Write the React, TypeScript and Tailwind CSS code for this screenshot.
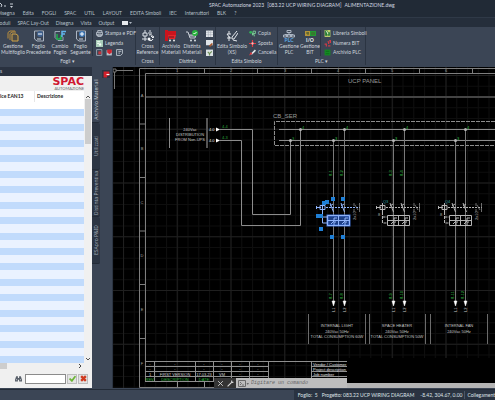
import type { ReactNode } from "react";

const MENU = ["Disegna", "Edita", "FOGLI", "SPAC", "UTIL", "LAYOUT", "EDITA Simboli", "IEC", "Interruttori", "BLK", "?"];
const TABS = ["Moduli", "SPAC Lay-Out", "Disegna", "Vista", "Output"];
const SIDE_TABS = ["Archivio Materiali", "Utilizzati", "Distinta Preventiva", "ESApro P&ID"];

function Icon({ children, small }: { children: ReactNode; small?: boolean }) {
  return (
    <svg
      viewBox="0 0 12 12"
      aria-hidden="true"
      fill="none"
      className={small ? "size-[7px] shrink-0" : "size-[12px] shrink-0"}
    >
      {children}
    </svg>
  );
}

/* ---------- ribbon icons ---------- */

const PagesIcon = (
  <Icon>
    <path d="M1 8.500V2.500L3 1h5M3 10V3.500L5 2h4" stroke="#b98d3c" />
    <path d="M5 4h4l2 1.500V11H5z" stroke="#d3a549" fill="#4c4a45" />
  </Icon>
);
const PrevIcon = (
  <Icon>
    <path d="M1.500 1h9v10H4L1.500 9z" stroke="#aab4c2" />
    <circle cx="7" cy="4" r="3" fill="#3f618e" />
    <path d="M5 4h4" stroke="#fff" />
    <path d="M4 9h4" stroke="#cdd5df" />
  </Icon>
);
const NextIcon = (
  <Icon>
    <path d="M1.500 1h9v10H4L1.500 9z" stroke="#aab4c2" />
    <circle cx="7" cy="4" r="3" fill="#3f79b8" />
    <path d="M5 4h4M7 2v4" stroke="#fff" />
    <path d="M4 9h4" stroke="#cdd5df" />
  </Icon>
);
const SwapIcon = (
  <Icon>
    <path d="M6 1.500H1v6l3 3h5V7" stroke="#9aa7b5" />
    <path d="M3 4v5h4V5M5 9l2-1" stroke="#1fae4d" strokeWidth="1.500" />
    <path d="M8 7V1.500h4M8 4h3" stroke="#63b6ee" strokeWidth="1.500" />
  </Icon>
);
const CrossIcon = (
  <Icon>
    <path d="M3 0v3M1 3h4v3H1zM3 6v5M0 9h5M8 0v2M6 3h4" stroke="#dde3ea" />
    <path d="M7 5c3-1 4 1 4 3M11 9c-1 2-3 2-4 1M9 6l2 2 1-2" stroke="#f2f5f8" />
    <circle cx="7" cy="9" r="1.500" fill="#f2f5f8" />
  </Icon>
);
const ArchiveIcon = (
  <Icon>
    <path d="M0 0h3v11H0zM3 1h8v5H3z" fill="#c9141d" />
    <path d="M3 5h8l-1 4H4z" fill="#e3262c" />
    <path d="M4 7h5" stroke="#6d1218" />
    <circle cx="5" cy="10.500" r="1" fill="#e8e8e8" />
    <circle cx="9" cy="10.500" r="1" fill="#e8e8e8" />
  </Icon>
);
const CartIcon = (
  <Icon>
    <path d="M0 2h2l2 6h5l1-3H3M4 6h5" stroke="#c8ced6" />
    <circle cx="5" cy="10.500" r="1" fill="#d8dde3" />
    <circle cx="9" cy="10.500" r="1" fill="#d8dde3" />
    <circle cx="9" cy="3" r="3" fill="#27b33d" />
    <path d="M7.500 3l1 1 2-2" stroke="#fff" />
  </Icon>
);
const EditIcon = (
  <Icon>
    <path d="M3 1v3M1 4h4M3 6v5M1 8h4M1 4l3 4" stroke="#e4e8ed" />
    <path d="M11 1L6 7v2h2l4-6M7 10l4 1" stroke="#e4e8ed" />
  </Icon>
);
const PlcIcon = (
  <svg viewBox="0 0 12 12" className="size-[12px]" aria-hidden="true" fill="none">
    <path d="M4 .5h4v2H4zM6 2.500v2M2 5.500v-1h8v1M.5 5h3v2h-3zM4.500 5h3v2h-3zM8.500 5h3v2h-3z" stroke="#aab4c2" />
    <text x="6" y="12" fontSize="5" textAnchor="middle" fill="#5aa9e6" className="font-bold">PLC</text>
  </svg>
);
const BitIcon = (
  <svg viewBox="0 0 12 12" className="size-[12px]" aria-hidden="true" fill="none">
    <path d="M1 1h5v5H1z" fill="#b49338" />
    <path d="M6 1h6v5H6z" fill="#229b33" />
    <path d="M2 3h3M4 2v3M8 2v3M10 2v3" stroke="#4b5a2c" />
    <text x="6" y="12" fontSize="5" textAnchor="middle" fill="#f1f3f5" className="font-bold">I/O</text>
  </svg>
);

const PrintIcon = (
  <Icon small>
    <path d="M3 4V1h7v3M1 4h10v5H1zM3 7h6v4H3z" stroke="#c4ccd6" strokeWidth="1.500" />
  </Icon>
);
const LegendIcon = (
  <Icon small>
    <path d="M0 0h12v12H0z" fill="#a8ccb8" />
    <path d="M2 3h5M2 6h3M7 10V5M9 8h-4" stroke="#f5fff8" strokeWidth="2" />
  </Icon>
);
const TableIcon = (
  <Icon small>
    <path d="M0 1h12v11H0z" fill="#e4e8ec" />
    <path d="M0 4h12M0 8h12M4 1v11M8 1v11" stroke="#a3abb5" />
  </Icon>
);
const PencilTableIcon = (
  <Icon small>
    <path d="M0 0h12v9H0z" fill="#dfe3e8" />
    <path d="M5 10l5-5 2 2-5 5z" fill="#a5572d" />
  </Icon>
);
const RefreshTableIcon = (
  <Icon small>
    <path d="M0 1h12v11H0z" fill="#dce2e4" />
    <path d="M3 5l3 3 4-4M6 8v3" stroke="#6f8f58" strokeWidth="2" />
  </Icon>
);
const SheetRedIcon = (
  <Icon small>
    <path d="M1 1h9v10H1z" stroke="#9fa9b6" strokeWidth="1.500" />
    <path d="M4 4h5v5H4z" fill="#c0353c" />
  </Icon>
);
const SheetMarkIcon = (
  <Icon small>
    <path d="M1 2h9v9H1z" fill="#b8c0ca" />
    <path d="M2 1h8v5L6 9 2 6z" fill="#cf2630" />
  </Icon>
);
const SheetGreyIcon = (
  <Icon small>
    <path d="M1 1h10v7l-3 3H1zM4 4h5M4 7h3" stroke="#c2cad3" strokeWidth="1.500" />
  </Icon>
);
const CopyIcon = (
  <Icon small>
    <circle cx="3" cy="4" r="2.500" fill="#2fb457" />
    <path d="M7 2h4v4H7zM5 8h4v3M6 5v4" stroke="#7fd39a" strokeWidth="1.500" />
  </Icon>
);
const MoveIcon = (
  <Icon small>
    <path d="M6 0v12M0 6h12" stroke="#e03a40" strokeWidth="2" />
    <circle cx="6" cy="6" r="2" fill="#ffb9bb" />
  </Icon>
);
const EraseIcon = (
  <Icon small>
    <path d="M3 8l7-7 2 2-7 7z" fill="#e6e9ec" />
    <path d="M0 11l3-6 3 3z" fill="#dd3a41" />
  </Icon>
);
const LibraryIcon = (
  <Icon small>
    <path d="M1 0h10v12H1z" fill="#bcc96c" />
    <path d="M2 1h4v9H2zM7 4h3v6H7z" fill="#207a35" />
    <path d="M4 2l3 5" stroke="#f4f6e4" strokeWidth="1.500" />
  </Icon>
);
const NumberIcon = (
  <Icon small>
    <path d="M1 7h3v4M6 3h2v4M9 1h2v4M7 10h4" stroke="#cf3b47" strokeWidth="2" />
  </Icon>
);
const PlcArchiveIcon = (
  <Icon small>
    <path d="M1 1h10v10H1z" fill="#148a22" />
    <path d="M3 4h6M3 8h6" stroke="#0c5d16" />
  </Icon>
);

/* ---------- ribbon ---------- */

function BigButton({ icon, lines, width }: { icon: ReactNode; lines: string[]; width: string }) {
  return (
    <button type="button" className={`flex shrink-0 flex-col items-center whitespace-nowrap ${width}`}>
      {icon}
      <span className="mt-px flex flex-col items-center leading-[6px]">
        {lines.map((line) => (
          <span key={line}>{line}</span>
        ))}
      </span>
    </button>
  );
}

function SmallButton({ icon, label }: { icon: ReactNode; label: string }) {
  return (
    <button type="button" className="flex items-center gap-[2px] leading-[7px] whitespace-nowrap">
      {icon}
      {label}
    </button>
  );
}

function Group({ title, width, children }: { title: string; width: string; children: ReactNode }) {
  return (
    <section className={`flex shrink-0 flex-col justify-between border-r border-[#2b3442] pt-[3px] ${width}`}>
      <div className="flex h-[26px]">{children}</div>
      <h2 className="text-center leading-[8px]">{title}</h2>
    </section>
  );
}

function Ribbon() {
  return (
    <div className="flex h-[38px] shrink-0 overflow-hidden bg-[#3b4555] text-[#cfd5dd]">
      <Group title="Fogli ▾" width="w-[136px]">
        <BigButton icon={PagesIcon} lines={["Gestione", "Multifoglio"]} width="w-[26px]" />
        <BigButton icon={PrevIcon} lines={["Foglio", "Precedente"]} width="w-[25px]" />
        <BigButton icon={SwapIcon} lines={["Cambio", "Foglio"]} width="w-[18px]" />
        <BigButton icon={NextIcon} lines={["Foglio", "Seguente"]} width="w-[23px]" />
        <div className="flex flex-col justify-between border-l border-[#2b3442] pl-[3px]">
          <SmallButton icon={PrintIcon} label="Stampa e PDF" />
          <SmallButton icon={LegendIcon} label="Legenda" />
          <div className="flex gap-[3px]">
            <button type="button" aria-label="Nuovo foglio">{SheetRedIcon}</button>
            <button type="button" aria-label="Elimina foglio">{SheetMarkIcon}</button>
            <button type="button" aria-label="Copia foglio">{SheetGreyIcon}</button>
          </div>
        </div>
      </Group>
      <Group title="Cross" width="w-[24px]">
        <BigButton icon={CrossIcon} lines={["Cross", "Reference"]} width="w-[23px]" />
      </Group>
      <Group title="Distinta" width="w-[56px]">
        <BigButton icon={ArchiveIcon} lines={["Archivio", "Materiali"]} width="w-[22px]" />
        <BigButton icon={CartIcon} lines={["Distinta", "Materiali"]} width="w-[20px]" />
        <div className="flex flex-col justify-between pl-[4px]">
          <button type="button" aria-label="Tabella">{TableIcon}</button>
          <button type="button" aria-label="Modifica tabella">{PencilTableIcon}</button>
          <button type="button" aria-label="Aggiorna tabella">{RefreshTableIcon}</button>
        </div>
      </Group>
      <Group title="Edita Simbolo" width="w-[62px]">
        <BigButton icon={EditIcon} lines={["Edita Simbolo", "(XS)"]} width="w-[32px]" />
        <div className="flex flex-col justify-between pl-px">
          <SmallButton icon={CopyIcon} label="Copia" />
          <SmallButton icon={MoveIcon} label="Sposta" />
          <SmallButton icon={EraseIcon} label="Cancella" />
        </div>
      </Group>
      <Group title="PLC ▾" width="w-[88px]">
        <BigButton icon={PlcIcon} lines={["Gestione", "PLC"]} width="w-[22px]" />
        <BigButton icon={BitIcon} lines={["Gestione", "BIT"]} width="w-[20px]" />
        <div className="flex flex-col justify-between border-l border-[#2b3442] pl-[3px]">
          <SmallButton icon={LibraryIcon} label="Libreria Simboli" />
          <SmallButton icon={NumberIcon} label="Numera BIT" />
          <SmallButton icon={PlcArchiveIcon} label="Archivio PLC" />
        </div>
      </Group>
    </div>
  );
}

/* ---------- materials panel ---------- */

function MaterialsPanel() {
  return (
    <aside className="flex w-[92px] shrink-0 flex-col bg-[#f0f0f0] text-[#222]">
      <div className="h-[9px] shrink-0 bg-[#2a3240] leading-[9px] text-[#c3cad4]">s</div>
      <div className="flex h-[15px] shrink-0 flex-col items-end justify-center pr-[8px]">
        <span className="font-['DejaVu_Sans',sans-serif] text-[11px] leading-[11px] font-bold text-[#cf1730]">SPAC</span>
        <span className="text-[4px] leading-[4px] text-[#666]">AUTOMAZIONE</span>
      </div>
      <div className="flex min-h-0 flex-1">
        <table className="flex flex-1 flex-col overflow-hidden bg-white">
          <thead className="block h-[18px] shrink-0">
            <tr className="flex h-[11px] items-center text-left leading-[11px] whitespace-nowrap">
              <th className="w-[35px] border-r border-[#e6e6e6] font-bold">ice EAN13</th>
              <th className="pl-[2px] font-bold">Descrizione</th>
            </tr>
          </thead>
          <tbody className="flex flex-1 flex-col">
            {Array.from({ length: 33 }, (_, i) => (
              <tr key={i} className={i % 2 ? "block flex-[6] bg-[#eaf2ff]" : "block flex-[5] bg-[#c1dbfc]"} />
            ))}
          </tbody>
        </table>
        <div className="flex w-[8px] shrink-0 flex-col items-center py-[2px]">
          <svg viewBox="0 0 4 3" className="mt-[2px] h-[3px] w-[4px]"><path d="M0 3l2-2 2 2" stroke="#555" fill="none" /></svg>
          <div className="mt-px h-[45px] w-[6px] bg-[#cdcdcd]" />
          <svg viewBox="0 0 4 3" className="mt-auto h-[3px] w-[4px]"><path d="M0 0l2 2 2-2" stroke="#555" fill="none" /></svg>
        </div>
      </div>
      <div className="flex h-[6px] shrink-0 items-center">
        <div className="h-full w-[7px] bg-[#cdcdcd]" />
        <svg viewBox="0 0 3 4" className="mr-[10px] ml-auto h-[4px] w-[3px]"><path d="M0 0l2 2-2 2" stroke="#444" fill="none" /></svg>
      </div>
      <form className="flex h-[19px] shrink-0 items-center gap-px pl-[15px]">
        <label htmlFor="find" className="mr-[2px]" aria-label="Cerca">
          <Icon small>
            <path d="M2 2h3v3h2V2h3l2 6v3H7V8H5v3H0V8z" fill="#59606a" />
            <path d="M2 8h1M9 8h1" stroke="#dfe3e8" strokeWidth="2" />
          </Icon>
        </label>
        <input id="find" className="h-[10px] w-[41px] border border-[#8b8b8b] bg-white px-px" />
        <button type="button" aria-label="Conferma" className="flex size-[10px] items-center justify-center border border-[#bdbdbd] bg-[#e4e4e4]">
          <Icon small><path d="M1 6l4 4 6-8" stroke="#6bb535" strokeWidth="3" /></Icon>
        </button>
        <button type="button" aria-label="Annulla" className="flex size-[10px] items-center justify-center border border-[#bdbdbd] bg-[#e4e4e4]">
          <Icon small><path d="M2 2l8 8M10 2l-8 8" stroke="#cf3a20" strokeWidth="4" /></Icon>
        </button>
      </form>
    </aside>
  );
}

function SideTabs() {
  return (
    <nav className="flex w-[8px] shrink-0 flex-col pt-[9px]">
      {SIDE_TABS.map((tab, i) => (
        <button
          key={tab}
          type="button"
          className={`flex h-[47px] items-center justify-center overflow-hidden rounded-r-xs border-b border-[#232b37] ${
            i === 0 ? "bg-[#3b4555] text-[#c3cad4]" : "bg-[#2c3543] text-[#a0a9b6]"
          }`}
        >
          <span className="rotate-180 font-['Noto_Sans',sans-serif] leading-[8px] whitespace-nowrap [writing-mode:vertical-rl]">{tab}</span>
        </button>
      ))}
    </nav>
  );
}

/* ---------- drawing ---------- */

const COLS = [177, 231, 285, 338, 392, 446];
const ROWS: [string, number][] = [["A", 96], ["B", 149], ["C", 203], ["D", 256], ["E", 310], ["F", 364]];

const LOADS = [
  { x: 333, x2: 344, tag: "Q2", top: ["8-1", "8-2"], bottom: ["8-7", "8-8"], center: 337, lines: ["INTERNAL LIGHT", "240Vac 50Hz", "TOTAL CONSUMPTION 60W"], left: 308, right: 365 },
  { x: 393, x2: 404, tag: "Q3", top: ["8-3", "8-4"], bottom: ["8-9", "8-10"], center: 397, lines: ["SPACE HEATER", "240Vac 50Hz", "TOTAL CONSUMPTION 50W"], left: 369, right: 425 },
  { x: 455, x2: 465, tag: "Q4", top: [], bottom: ["8-11", "8-12"], center: 459, lines: ["INTERNAL FAN", "240Vac 50Hz"], left: 430, right: 487 },
];

const GRIPS = [[331, 197], [341, 197], [322, 201], [325, 200], [316, 214], [319, 214], [319, 227], [330, 235], [341, 235]];

function Breaker({ x, tag, selected }: { x: number; tag: string; selected?: boolean }) {
  return (
    <g transform={`translate(${x} 0)`} stroke={selected ? "#8fb3fa" : "#b4b4b4"} fill="none">
      {selected && <path d="M-5.500 215.500h22v10h-22z" fill="#1d3f86" stroke="#3f6fd0" strokeWidth="2" />}
      <path d="M-17 207.500h5M-16.500 206v3M-13 205.500h5v4h-5zM-10.500 203v9" />
      <path d="M-7 207.500h34" strokeDasharray="2 1" />
      <path d="M-3 203l3.500 9M8 203l3.500 9M-3 206l3-2M8 206l3-2" />
      <path d="M-10.500 212v11h5M-10.500 217h5" strokeDasharray={selected ? "none" : "3 1"} />
      <path d="M-5.500 215.500h22v10h-22zM5.500 215.500v10M-5.500 220.500h22" />
      <path d="M-2 224l3-3v-3h3M9 224l3-3v-3h3M1 225v-3h2M12 225v-3h2" />
      <path d="M21 203v3M21 209v3M22 205l3 5M26.500 203v9" stroke="#999" strokeWidth=".7" />
      <g stroke="none" fontSize="4">
        {!selected && (
          <>
            <text x="-10" y="203" fill="#35a3a8">{tag}</text>
            <text x="-15" y="216" fill="#aaa">8</text>
          </>
        )}
        <text transform="translate(23 220) rotate(-90)" fill="#a5a5a5">2x10</text>
      </g>
    </g>
  );
}

function Schematic() {
  return (
    <svg
      viewBox="113 67 382 321"
      preserveAspectRatio="xMinYMin slice"
      className="h-full w-full font-['Liberation_Sans',sans-serif]"
      role="img"
      aria-label="UCP wiring diagram"
    >
      <defs>
        <pattern id="minor" x="123" y="75" width="10.75" height="10.75" patternUnits="userSpaceOnUse">
          <path d="M.5 0v10.750M0 .5h10.750" stroke="#0e0e0e" />
        </pattern>
        <pattern id="major" x="123" y="75" width="53.75" height="53.75" patternUnits="userSpaceOnUse">
          <path d="M.5 0v53.750M0 .5h53.750" stroke="#1f1f1f" />
        </pattern>
      </defs>
      <path d="M113 67h1200v800H113z" fill="#000" />
      <path d="M113 67h1200v800H113z" fill="url(#minor)" />
      <path d="M113 67h1200v800H113z" fill="url(#major)" />

      {/* UCS marker */}
      <path d="M113 69h3v3h-3zM116 70.500h17M114.500 72v17" stroke="#777" fill="none" />

      {/* sheet frame */}
      <g stroke="#7e7e7e" fill="none">
        <path d="M600 68.500H139.500v319H600M600 73.500H145.500v308" />
        <path d="M204.500 68v5M257.500 68v5M311.500 68v5M365.500 68v5M419.500 68v5M472.500 68v5" />
        <path d="M139 124h6M139 177.500h6M139 231h6M139 284.500h6M139 338.500h6" />
      </g>
      <path d="M146 97h454" stroke="#444" strokeWidth="2" />
      <g fill="#a0a0a0" fontSize="4" textAnchor="middle">
        {COLS.map((x, i) => <text key={x} x={x} y="72">{i + 1}</text>)}
        {ROWS.map(([name, y]) => <text key={name} x="142" y={y + 1}>{name}</text>)}
      </g>

      <g fill="#9a9a9a" fontSize="6">
        <text x="348" y="83">UCP PANEL</text>
        <text x="273" y="118">CB_SER</text>
      </g>

      {/* supply from distribution */}
      <path d="M169.500 118v30" stroke="#8a8a8a" />
      <path d="M207 118v30" stroke="#555" strokeWidth="2" />
      <g fill="#c8c8c8" fontSize="4" textAnchor="middle">
        <text x="190" y="131">240Vac</text>
        <text x="190" y="136">DISTRIBUTION</text>
        <text x="190" y="141">FROM Non-UPS</text>
      </g>
      <g fill="#e2e2e2" fontSize="4">
        <text x="209" y="131">4.0</text>
        <text x="209" y="142">4.0</text>
        <path d="M216 127.500l4 2-4 2zM216 138.500l4 2-4 2z" fill="#fff" />
      </g>
      <g fill="#2ba23c" fontSize="4">
        <text x="222" y="128">4-4</text>
        <text x="222" y="139">4-3</text>
      </g>
      <g stroke="#8c8c8c" fill="none">
        <path d="M219 129.500h33.500v85h38v-74M219 140.500h22.500v85h59v-96" />
        <path d="M279 129.500h321M279 140.500h321" />
        <path d="M600 121.500H274.500v24H600" strokeDasharray="4 1" />
      </g>
      <g fill="#b5b5b5">
        <circle cx="300.500" cy="129.500" r="1.500" />
        <circle cx="290.500" cy="140.500" r="1.500" />
      </g>
      <g fill="#2ba23c" fontSize="4">
        <text x="302" y="129">4</text>
        <text x="292" y="140">3</text>
      </g>

      {LOADS.map((load, i) => (
        <g key={load.tag}>
          <path d={`M${load.x + 0.5} 140v161`} stroke="#7a7a7a" />
          <path d={`M${load.x2 + 0.5} 129v172`} stroke="#7a7a7a" />
          <g fill="#b5b5b5">
            <circle cx={load.x + 0.5} cy="140.500" r="1.500" />
            <circle cx={load.x2 + 0.5} cy="129.500" r="1.500" />
            <path d={`M${load.x - 1} 301h3l-1.500 5zM${load.x2 - 1} 301h3l-1.500 5z`} fill="#fff" stroke="#fff" strokeWidth=".5" />
          </g>
          <g fill="#35c24a" fontSize="4">
            <text x={load.x + 2} y="140">3</text>
            <text x={load.x2 + 2} y="129">4</text>
            {load.top.map((t, n) => (
              <text key={t} transform={`translate(${(n ? load.x2 : load.x) - 1} 176) rotate(-90)`}>{t}</text>
            ))}
            {load.bottom.map((t, n) => (
              <text key={t} transform={`translate(${(n ? load.x2 : load.x) - 1} 299) rotate(-90)`}>{t}</text>
            ))}
          </g>
          <g fill="#c9c9c9" fontSize="4">
            <text transform={`translate(${load.x + 2} 312) rotate(-90)`}>L1</text>
            <text transform={`translate(${load.x2 + 2} 312) rotate(-90)`}>L2</text>
          </g>
          <path d={`M${load.left + 0.5} 314v30M${load.right + 0.5} 314v30`} stroke="#6b6b6b" />
          <g fill="#c4c4c4" fontSize="4" textAnchor="middle">
            {load.lines.map((line, n) => <text key={line} x={load.center} y={327 + n * 5.5}>{line}</text>)}
          </g>
          <Breaker x={load.x} tag={load.tag} selected={i === 0} />
        </g>
      ))}
      {GRIPS.map(([x, y]) => <path key={`${x}-${y}`} d={`M${x} ${y}h4v4h-4z`} fill="#1f7fd6" />)}

      {/* revision table and title block */}
      <path d="M347 358h300v25H347z" fill="#000" />
      <g stroke="#8f8f8f" fill="none">
        <path d="M145 361.500h202M145 366.500h123M145 371.500h123M145 376.500h123M145 381.500h123" />
        <path d="M154.500 361v20M195.500 361v20M213.500 361v20M231.500 361v20M249.500 361v20M268.500 361v20" />
        <path d="M311.500 361v20M311 366.500h36M311 371.500h36M311 376.500h36M177.500 382v5M204.500 382v5" />
      </g>
      <g fill="#d0d0d0" fontSize="4" textAnchor="middle">
        {[150, 175, 204, 222, 240, 258].map((x) => (
          <g key={x}>
            <text x={x} y="365">-</text>
            <text x={x} y="370">-</text>
          </g>
        ))}
        <text x="150" y="375.500">1</text>
        <text x="175" y="375.500">FIRST VERSION</text>
        <text x="204" y="375.500">17.03.23</text>
        <text x="222" y="375.500">VM</text>
        <text x="240" y="375">-</text>
        <text x="258" y="375">-</text>
      </g>
      <g fill="#2bb53c" fontSize="4" textAnchor="middle">
        <text x="150" y="380.500">REV.</text>
        <text x="175" y="380.500">DESCRIPTION</text>
        <text x="204" y="380.500">DATE</text>
      </g>
      <g fill="#e2e2e2" fontSize="4">
        <text x="313" y="365.500">Vendor / Customer</text>
        <text x="313" y="370.500">Project description</text>
        <text x="313" y="375.500">Job number</text>
      </g>
    </svg>
  );
}

function CommandLine() {
  return (
    <div className="absolute right-0 bottom-0 left-[101px] flex items-end">
      <div className="flex h-[10px] w-[22px] shrink-0 items-center justify-center gap-[3px] bg-[#343434]">
        <button type="button" aria-label="Chiudi">
          <Icon small><path d="M2 2l8 8M10 2l-8 8" stroke="#d5d5d5" strokeWidth="1.500" /></Icon>
        </button>
        <button type="button" aria-label="Personalizza">
          <Icon small><path d="M1 11l7-7M8 1v3h3" stroke="#d5d5d5" strokeWidth="2" /></Icon>
        </button>
      </div>
      <div className="flex h-[10px] w-[111px] shrink-0 items-center gap-[2px] bg-[#bdbdbd] pl-[2px]">
        <svg viewBox="0 0 11 7" className="h-[7px] w-[11px]" aria-hidden="true" fill="none">
          <path d="M.5.5h7v6h-7zM2 2l1.500 1.500L2 5M4 5h2" stroke="#6a6a6a" />
          <path d="M8.500 3h2.500l-1.200 2z" fill="#6a6a6a" />
        </svg>
        <input
          aria-label="Riga di comando"
          placeholder="Digitare un comando"
          className="h-[8px] w-[90px] bg-transparent font-['Liberation_Mono',monospace] text-[5px] italic placeholder:text-[#666]"
        />
      </div>
      <div className="h-[5px] flex-1 bg-[#b4b4b4]" />
    </div>
  );
}

/* ---------- page ---------- */

export default function App() {
  return (
    <div className="flex h-screen flex-col overflow-hidden bg-[#3b4555] font-['Lato',sans-serif] text-[5px] leading-[8px]">
      <header className="shrink-0 bg-[#212a36] text-[#b8c0ca]">
        <div className="flex h-[9px] items-center whitespace-nowrap">
          <svg viewBox="0 0 14 8" className="h-[8px] w-[14px]" aria-hidden="true" fill="none">
            <path d="M0 2l2 2-1 2M4 5h2M10 3h3" stroke="#c8ced6" />
            <path d="M10 5h3l-1.500 2z" fill="#c8ced6" />
          </svg>
          <h1 className="ml-[195px] flex gap-[3px] text-[#d3d9e0]">
            <span>SPAC Automazione 2023</span>
            <span>[083.22 UCP WIRING DIAGRAM]</span>
            <span>ALIMENTAZIONE.dwg</span>
          </h1>
        </div>
        <nav className="-ml-[3px] flex h-[9px] items-center gap-[8px] border-b border-[#2f3947] whitespace-nowrap">
          {MENU.map((item) => <button key={item} type="button">{item}</button>)}
        </nav>
        <nav className="-ml-[5px] flex h-[9px] items-center gap-[7px] bg-[#252e3b] whitespace-nowrap">
          {TABS.map((tab) => <button key={tab} type="button">{tab}</button>)}
          <svg viewBox="0 0 10 4" className="ml-px h-[4px] w-[10px]" aria-hidden="true">
            <path d="M0 0h6v4H0z" fill="#e6e9ed" />
            <path d="M7 1h3L8.500 3z" fill="#aeb6c1" />
          </svg>
        </nav>
      </header>
      <Ribbon />
      <main className="mt-[2px] flex min-h-0 flex-1">
        <MaterialsPanel />
        <SideTabs />
        <div className="flex w-[13px] shrink-0 flex-col items-center border-r border-[#2b3442] pt-[3px]">
          <button type="button" aria-label="Strumenti SPAC" className="flex size-[8px] items-center justify-center bg-[#2c3543]">
            <Icon small>
              <path d="M1 1h10v7H7v3H1z" fill="#d3202b" />
              <path d="M6 6h5" stroke="#fff" strokeWidth="2" />
            </Icon>
          </button>
        </div>
        <div className="relative min-w-0 flex-1 overflow-hidden bg-black">
          <Schematic />
          <CommandLine />
        </div>
      </main>
      <footer className="mt-px flex h-[11px] shrink-0 items-center justify-end border-t border-[#232b37] whitespace-nowrap text-[#dfe3e8]">
        <div className="flex h-full items-center bg-[#2a3341] pl-[4px]">
          <span className="mr-[4px]">Foglio: &nbsp;5</span>
          <span className="mr-[6px]">Progetto: 083.22 UCP WIRING DIAGRAM</span>
          <span className="mr-[2px]">-8.42, 304.67, 0.00</span>
          <span className="border-l border-[#4a5566] pl-[2px]">Collegament</span>
        </div>
      </footer>
    </div>
  );
}
